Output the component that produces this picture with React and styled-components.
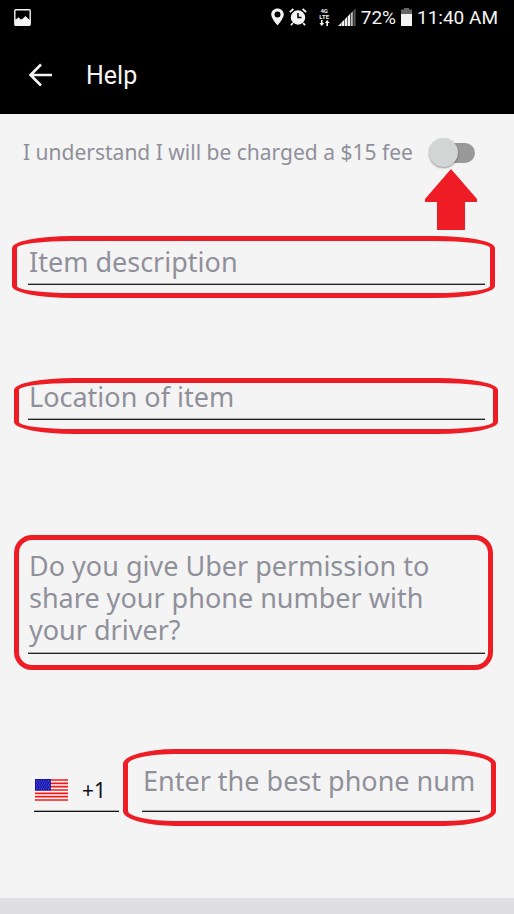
import React, { useState } from "react";
import styled, { createGlobalStyle } from "styled-components";

const GlobalStyle = createGlobalStyle`
	* {
		box-sizing: border-box;
	}

	body {
		margin: 0;
		background-color: #f4f4f4;
		font-family: "Noto Sans", sans-serif;
	}
`;

const Page = styled.div`
	min-height: 100vh;
	display: flex;
	flex-direction: column;
	background-color: #f4f4f4;
`;

const Header = styled.header`
	background-color: #000;
	color: #f4f4f4;
	font-family: Roboto, sans-serif;
`;

const StatusBar = styled.div`
	height: 34px;
	padding: 0 16px 0 14px;
	display: flex;
	justify-content: space-between;
	align-items: center;
	font-size: 19px;
`;

const StatusGroup = styled.div`
	display: flex;
	align-items: center;
	gap: ${(props) => props.$gap}px;
`;

const AppBar = styled.div`
	height: 80px;
	padding: 2px 28px 0;
	display: flex;
	align-items: center;
	gap: 34px;
`;

const BackButton = styled.button`
	display: flex;
	padding: 0;
	border: none;
	background-color: transparent;
	color: inherit;
	cursor: pointer;
`;

const Title = styled.h1`
	margin: 0;
	font-size: 25px;
	font-weight: 400;
`;

const Form = styled.form`
	flex: 1;
	padding: 22px 29px 86px 28px;
	display: flex;
	flex-direction: column;
`;

const FeeRow = styled.div`
	position: relative;
	height: 34px;
	margin: 0 10px 0 -5px;
	display: flex;
	justify-content: space-between;
	align-items: center;
`;

const FeeLabel = styled.label`
	padding-bottom: 2px;
	color: #90909a;
	font-size: 21px;
	white-space: nowrap;
`;

const Toggle = styled.input`
	appearance: none;
	position: relative;
	flex: none;
	width: 46px;
	height: 30px;
	margin: 0;
	cursor: pointer;

	&::before {
		content: "";
		position: absolute;
		inset: 5px 0 5px 6px;
		border-radius: 10px;
		background-color: #999;
	}

	&::after {
		content: "";
		position: absolute;
		top: 0;
		left: 0;
		width: 29px;
		height: 29px;
		border-radius: 50%;
		background-color: #d3d4d4;
		box-shadow: 0 1px 2px rgba(0, 0, 0, 0.4);
	}

	&:checked::after {
		left: 17px;
	}
`;

const Arrow = styled.svg`
	position: absolute;
	top: 33px;
	right: -2px;
`;

const Field = styled.div`
	position: relative;
	flex: ${(props) => (props.$grow ? "1" : "none")};
	min-width: 0;
	margin-top: ${(props) => props.$top || 0}px;
`;

// red marker line drawn round a field
const Ring = styled.span`
	position: absolute;
	inset: ${(props) => props.$inset};
	border: 5px solid #ee1c24;
	border-radius: ${(props) => props.$radius || "60px / 12px"};
	pointer-events: none;
`;

const TextInput = styled.input`
	display: block;
	width: 100%;
	height: ${(props) => (props.$tall ? 50 : 42)}px;
	padding: 0 0 ${(props) => (props.$tall ? 12 : 4)}px 1px;
	border: none;
	border-bottom: 1px solid #222;
	border-radius: 0;
	outline: none;
	background-color: transparent;
	box-shadow: inset 0 -1px 0 #aaa;
	font-family: inherit;
	font-size: 27px;

	&::placeholder {
		color: #90909a;
		opacity: 1;
	}
`;

const TextArea = styled(TextInput)`
	height: 104px;
	line-height: 32px;
	resize: none;
	overflow: hidden;
`;

const PhoneRow = styled.div`
	margin: 108px 5px 0 6px;
	display: flex;
	align-items: flex-end;
	gap: 23px;
`;

const CountryCode = styled.div`
	width: 85px;
	height: 40px;
	padding: 0 0 4px 1px;
	display: flex;
	align-items: center;
	gap: 14px;
	border-bottom: 1px solid #111;
	box-shadow: inset 0 -1px 0 #aaa;
`;

const CodeSelect = styled.select`
	appearance: none;
	padding: 0;
	border: none;
	outline: none;
	background-color: transparent;
	color: #11111d;
	font-family: inherit;
	font-size: 21px;
`;

const Footer = styled.footer`
	height: 16px;
	background-color: #dfdfe1;
`;

function PictureIcon() {
	return (
		<svg width="17" height="17" viewBox="0 0 17 17">
			<rect x="0.8" y="0.8" width="15.4" height="15.4" rx="1" fill="none" stroke="#f4f4f4" strokeWidth="1.4" />
			<path d="M1 10.5 L2.5 10 L4.5 8.2 L6.5 10.2 L8 10.2 L11.5 7 L14 9.5 L16 11 V16 H1 Z" fill="#f4f4f4" />
		</svg>
	);
}

function PinIcon() {
	return (
		<svg width="13" height="18" viewBox="0 0 13 18">
			<path fillRule="evenodd" d="M6.5 0.5 C3 0.5 0.2 3 0.2 6.6 C0.2 10.5 6.5 17.5 6.5 17.5 C6.5 17.5 12.8 10.5 12.8 6.6 C12.8 3 10 0.5 6.5 0.5 Z M6.5 3.6 A3 3 0 1 1 6.5 9.6 A3 3 0 0 1 6.5 3.6 Z" fill="#f4f4f4" />
		</svg>
	);
}

function AlarmIcon() {
	return (
		<svg width="18" height="18" viewBox="0 0 18 18">
			<circle cx="9" cy="9.5" r="7.2" fill="#f4f4f4" />
			<path d="M0.8 4.2 L4.4 1 M17.2 4.2 L13.6 1 M3.8 15 L2 17.2 M14.2 15 L16 17.2" stroke="#f4f4f4" strokeWidth="1.8" />
			<path d="M9 5 V9.6 H12.5" fill="none" stroke="#000" strokeWidth="1.5" />
		</svg>
	);
}

const NetworkType = styled.div`
	width: 11px;
	display: flex;
	flex-direction: column;
	align-items: center;
	font-size: 6px;
	font-weight: 700;
	line-height: 6px;
`;

function NetworkIcon() {
	return (
		<NetworkType>
			<span>4G</span>
			<span>LTE</span>
			<svg width="11" height="6" viewBox="0 0 11 6" fill="#f4f4f4">
				<path d="M2 0 H3.6 V3 H5.2 L2.8 6 L0.4 3 H2 Z M7.4 6 H9 V3 H10.6 L8.2 0 L5.8 3 H7.4 Z" />
			</svg>
		</NetworkType>
	);
}

function SignalIcon() {
	return (
		<svg width="18" height="18" viewBox="0 0 18 18" fill="#f4f4f4">
			<path d="M0 18 L3 15 V18 Z M3.4 14.6 L6 12 V18 H3.4 Z M6.6 11.4 L9 9 V18 H6.6 Z M9.6 8.4 L12 6 V18 H9.6 Z" />
			<path d="M12.6 5.4 L14.8 3.2 V18 H12.6 Z" fill="#bbb" />
			<path d="M15.4 2.6 L17.6 0.4 V18 H15.4 Z" fill="#555" />
		</svg>
	);
}

function BatteryIcon() {
	return (
		<svg width="11" height="18" viewBox="0 0 11 18">
			<path d="M3 0 H8 V1.5 H11 V6 H0 V1.5 H3 Z" fill="#666" />
			<rect y="6" width="11" height="12" fill="#f4f4f4" />
		</svg>
	);
}

function FlagIcon() {
	return (
		<svg width="33" height="22" viewBox="0 0 33 22">
			<rect width="33" height="22" fill="#fff" />
			<path d="M0 1 H33 M0 4.4 H33 M0 7.7 H33 M0 11 H33 M0 14.3 H33 M0 17.6 H33 M0 21 H33" stroke="#fa1414" strokeWidth="1.7" />
			<rect width="16" height="11.5" fill="#1414b4" />
			<path d="M1 2 H16 M2 4 H16 M1 6 H16 M2 8 H16 M1 10 H16" stroke="#8c8cdc" strokeWidth="0.8" strokeDasharray="1 1.4" />
		</svg>
	);
}

function App() {
	const [agreed, setAgreed] = useState(false);

	return (
		<Page>
			<GlobalStyle />
			<Header>
				<StatusBar>
					<PictureIcon />
					<StatusGroup $gap={5}>
						<StatusGroup $gap={12}>
							<StatusGroup $gap={5}>
								<PinIcon />
								<AlarmIcon />
							</StatusGroup>
							<StatusGroup $gap={8}>
								<NetworkIcon />
								<SignalIcon />
							</StatusGroup>
						</StatusGroup>
						<span>72%</span>
						<BatteryIcon />
						<span>11:40 AM</span>
					</StatusGroup>
				</StatusBar>
				<AppBar>
					<BackButton type="button" aria-label="Back">
						<svg width="24" height="24" viewBox="0 0 24 24" fill="none" stroke="#f4f4f4" strokeWidth="2.6">
							<path d="M24 12 H2.5 M13 1.5 L2.5 12 L13 22.5" />
						</svg>
					</BackButton>
					<Title>Help</Title>
				</AppBar>
			</Header>
			<Form onSubmit={(e) => e.preventDefault()}>
				<FeeRow>
					<FeeLabel htmlFor="fee">I understand I will be charged a $15 fee</FeeLabel>
					<Toggle id="fee" type="checkbox" role="switch" checked={agreed} onChange={(e) => setAgreed(e.target.checked)} />
					<Arrow width="52" height="62" viewBox="0 0 52 62" fill="#ee1c24">
						<path d="M26 0 L52 30 V33 H40 V61 H12 V33 H0 V30 Z" />
					</Arrow>
				</FeeRow>
				<Field $top={73}>
					<TextInput type="text" placeholder="Item description" aria-label="Item description" />
					<Ring $inset="-7px -10px -13px -16px" />
				</Field>
				<Field $top={93}>
					<TextInput type="text" placeholder="Location of item" aria-label="Location of item" />
					<Ring $inset="0 -13px -14px -14px" />
				</Field>
				<Field $top={130}>
					<TextArea as="textarea" placeholder="Do you give Uber permission to share your phone number with your driver?" aria-label="Do you give Uber permission to share your phone number with your driver?" />
					<Ring $inset="-15px -8px -16px -14px" $radius="18px" />
				</Field>
				<PhoneRow>
					<CountryCode>
						<FlagIcon />
						<CodeSelect aria-label="Country code">
							<option>+1</option>
						</CodeSelect>
					</CountryCode>
					<Field $grow>
						<TextInput $tall type="tel" placeholder="Enter the best phone num" aria-label="Phone number" />
						<Ring $inset="-13px -16px -14px -19px" $radius="52px / 15px" />
					</Field>
				</PhoneRow>
			</Form>
			<Footer />
		</Page>
	);
}

export default App;
